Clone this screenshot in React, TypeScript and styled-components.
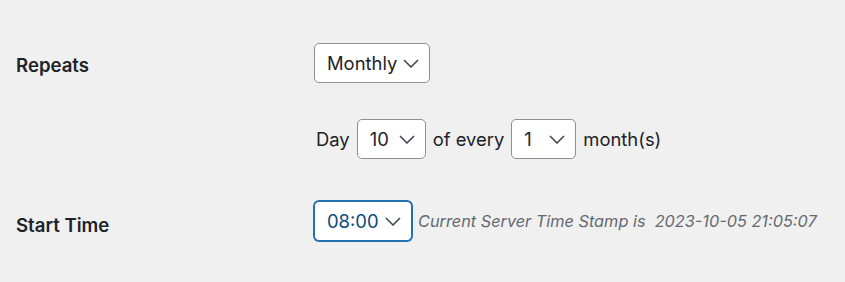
import { FC } from 'react';
import styled, { createGlobalStyle } from 'styled-components';

const GlobalStyle = createGlobalStyle`
  html, body {
    margin: 0;
    padding: 0;
    background: #f0f0f1;
  }
  body {
    font-family: Inter, "Noto Sans", "Liberation Sans", sans-serif;
    color: #1d2327;
  }
`;

const Page = styled.div`
  padding: 43px 0 0 16px;
  width: 829px;
  height: 239px;
`;

const Row = styled.div<{ $top?: number }>`
  display: grid;
  grid-template-columns: 298px 1fr;
  align-items: start;
  margin-top: ${(p) => p.$top ?? 0}px;
`;

const Label = styled.div<{ $offset: number }>`
  margin-top: ${(p) => p.$offset}px;
  font-size: 18.6px;
  line-height: 24px;
  font-weight: 600;
  color: #1d2327;
`;

const Field = styled.div`
  display: flex;
  flex-direction: column;
  align-items: flex-start;
`;

const Line = styled.div<{ $top?: number }>`
  display: flex;
  align-items: center;
  gap: 7px;
  margin-top: ${(p) => p.$top ?? 0}px;
  font-size: 18.4px;
  color: #1d2327;
`;

const Word = styled.span<{ $indent?: number }>`
  margin-left: ${(p) => p.$indent ?? 0}px;
  line-height: 24px;
`;

const SelectWrap = styled.div`
  position: relative;
  display: inline-flex;
`;

const NativeSelect = styled.select<{ $width: number; $focused?: boolean }>`
  appearance: none;
  -webkit-appearance: none;
  box-sizing: border-box;
  width: ${(p) => p.$width}px;
  height: 40px;
  margin: 0;
  padding: 0 32px 0 12px;
  font-family: inherit;
  font-size: 18.4px;
  line-height: 38px;
  color: ${(p) => (p.$focused ? '#0a4b78' : '#1d2327')};
  background: #fff;
  border: 1px solid ${(p) => (p.$focused ? '#2271b1' : '#8c8f94')};
  box-shadow: ${(p) => (p.$focused ? '0 0 0 1px #2271b1' : 'none')};
  border-radius: 5px;
  outline: none;
`;

const Chevron = styled.svg`
  position: absolute;
  right: 11px;
  top: 50%;
  width: 16px;
  height: 9px;
  margin-top: -4px;
  pointer-events: none;
`;

const Description = styled.span`
  margin-left: 6px;
  font-size: 16.3px;
  font-style: italic;
  color: #646970;
  white-space: pre;
`;

const TimeLine = styled.div`
  display: flex;
  align-items: center;
`;

interface SelectProps {
  value: string;
  options: string[];
  width: number;
  focused?: boolean;
}

const Select: FC<SelectProps> = ({ value, options, width, focused }) => (
  <SelectWrap>
    <NativeSelect $width={width} $focused={focused} defaultValue={value}>
      {options.map((o) => (
        <option key={o} value={o}>
          {o}
        </option>
      ))}
    </NativeSelect>
    <Chevron viewBox="0 0 16 9">
      <path d="M1 1l7 7 7-7" fill="none" stroke="#3c434a" strokeWidth="1.5" />
    </Chevron>
  </SelectWrap>
);

const days = Array.from({ length: 31 }, (_, i) => String(i + 1));
const months = Array.from({ length: 12 }, (_, i) => String(i + 1));

export default function App() {
  return (
    <>
      <GlobalStyle />
      <Page>
        <Row>
          <Label $offset={10}>Repeats</Label>
          <Field>
            <Select value="Monthly" options={['Daily', 'Weekly', 'Monthly']} width={116} />
            <Line $top={36}>
              <Word $indent={2}>Day</Word>
              <Select value="10" options={days} width={69} />
              <Word>of every</Word>
              <Select value="1" options={months} width={65} />
              <Word>month(s)</Word>
            </Line>
          </Field>
        </Row>
        <Row $top={42}>
          <Label $offset={12}>Start Time</Label>
          <TimeLine>
            <Select value="08:00" options={['07:00', '08:00', '09:00']} width={98} focused />
            <Description>Current Server Time Stamp is  2023-10-05 21:05:07</Description>
          </TimeLine>
        </Row>
      </Page>
    </>
  );
}
